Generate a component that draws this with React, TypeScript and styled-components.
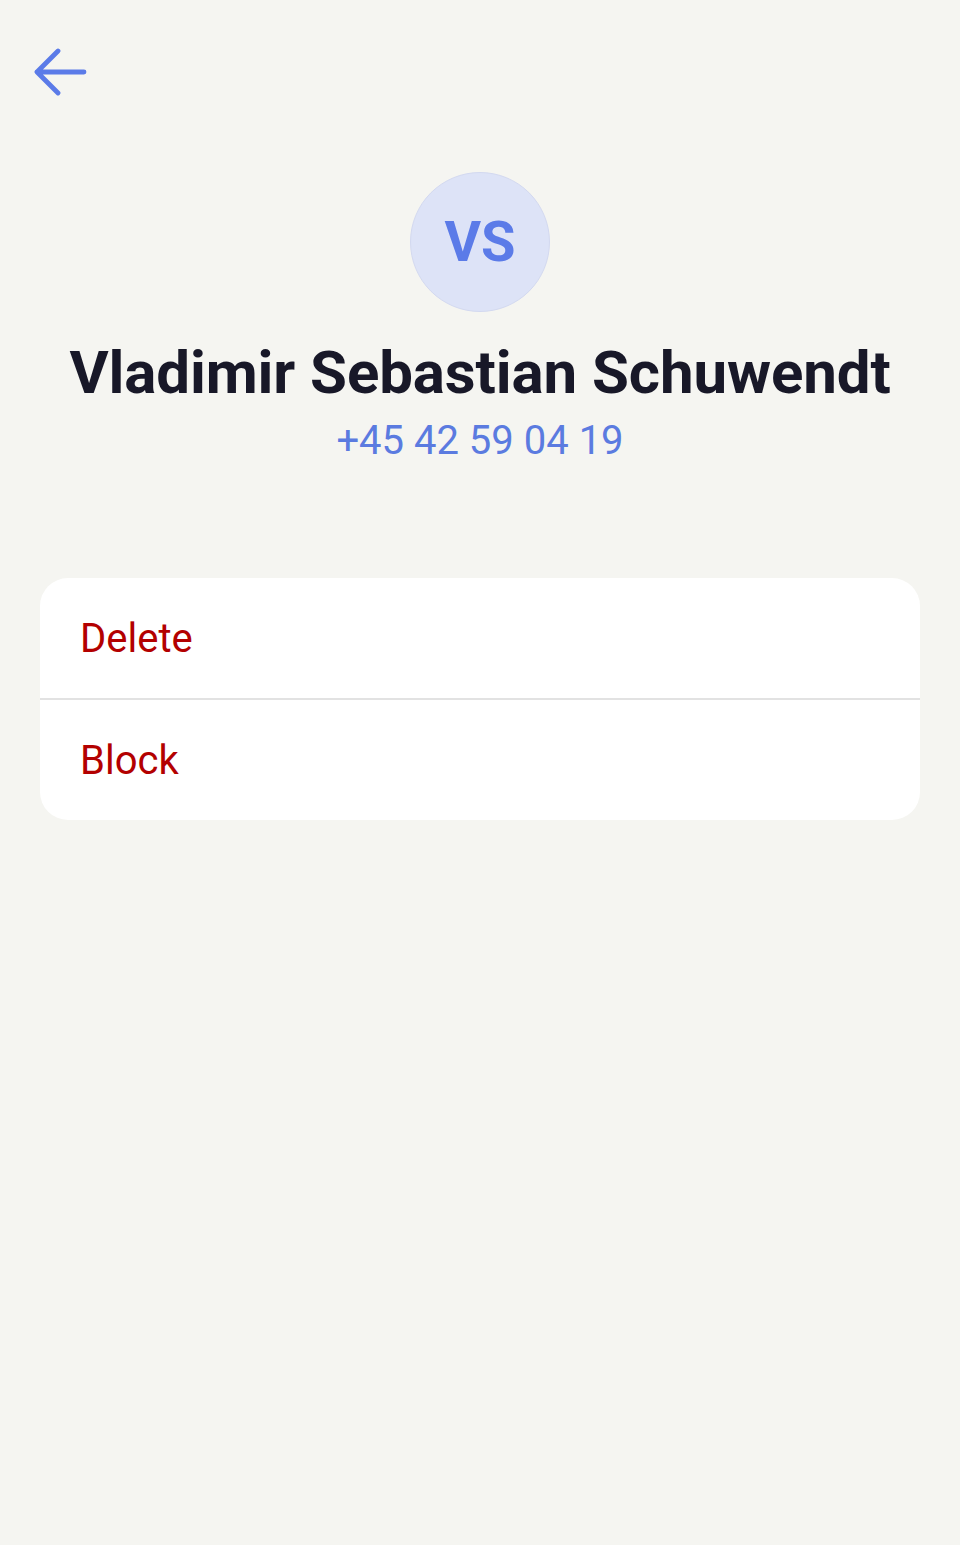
import React from 'react';
import styled, { createGlobalStyle } from 'styled-components';

const GlobalStyle = createGlobalStyle`
  html, body {
    margin: 0;
    padding: 0;
    background-color: #f5f5f1;
    font-family: Roboto, "Liberation Sans", sans-serif;
  }
`;

const Page = styled.div`
  min-height: 1545px;
  background-color: #f5f5f1;
  padding: 0 40px;
  box-sizing: border-box;
`;

const TopBar = styled.div`
  height: 144px;
  display: flex;
  align-items: flex-start;
  padding-top: 48px;
  box-sizing: border-box;
`;

const BackButton = styled.button`
  border: none;
  background: none;
  padding: 0;
  margin-left: -6px;
  width: 54px;
  height: 48px;
  cursor: pointer;
  display: flex;
  align-items: center;
  justify-content: center;
`;

const Profile = styled.div`
  display: flex;
  flex-direction: column;
  align-items: center;
  padding-top: 28px;
`;

const Avatar = styled.div`
  width: 140px;
  height: 140px;
  border-radius: 50%;
  background-color: #dde3f7;
  border: 1px solid #d3d9f0;
  box-sizing: border-box;
  display: flex;
  align-items: center;
  justify-content: center;
  color: #5b7be8;
  font-size: 56px;
  font-weight: 700;
`;

const Name = styled.h1`
  margin: 29px 0 0;
  font-size: 60px;
  line-height: 64px;
  font-weight: 700;
  color: #181828;
  text-align: center;
  letter-spacing: -0.1px;
`;

const Phone = styled.div`
  margin-top: 13px;
  font-size: 40px;
  line-height: 46px;
  color: #5b7be0;
`;

const ActionCard = styled.div`
  margin-top: 114px;
  background-color: #ffffff;
  border-radius: 28px;
  overflow: hidden;
`;

const ActionRow = styled.button<{ $divider?: boolean }>`
  display: flex;
  align-items: center;
  width: 100%;
  height: ${p => (p.$divider ? '122px' : '120px')};
  padding: 0 40px;
  border: none;
  border-bottom: ${p => (p.$divider ? '2px solid #e2e2e2' : 'none')};
  background: none;
  font-family: Roboto, "Liberation Sans", sans-serif;
  font-size: 40px;
  color: #b30000;
  text-align: left;
  box-sizing: border-box;
  cursor: pointer;
`;

const App: React.FC = () => {
  return (
    <Page>
      <GlobalStyle />
      <TopBar>
        <BackButton aria-label="Back">
          <svg width="54" height="48" viewBox="0 0 54 48" fill="none">
            <path
              d="M24 3 L3 24 L24 45 M3 24 H50"
              stroke="#5b7be8"
              strokeWidth="4.8"
              strokeLinecap="round"
              strokeLinejoin="round"
            />
          </svg>
        </BackButton>
      </TopBar>
      <Profile>
        <Avatar>VS</Avatar>
        <Name>Vladimir Sebastian Schuwendt</Name>
        <Phone>+45 42 59 04 19</Phone>
      </Profile>
      <ActionCard>
        <ActionRow $divider>Delete</ActionRow>
        <ActionRow>Block</ActionRow>
      </ActionCard>
    </Page>
  );
};

export default App;
